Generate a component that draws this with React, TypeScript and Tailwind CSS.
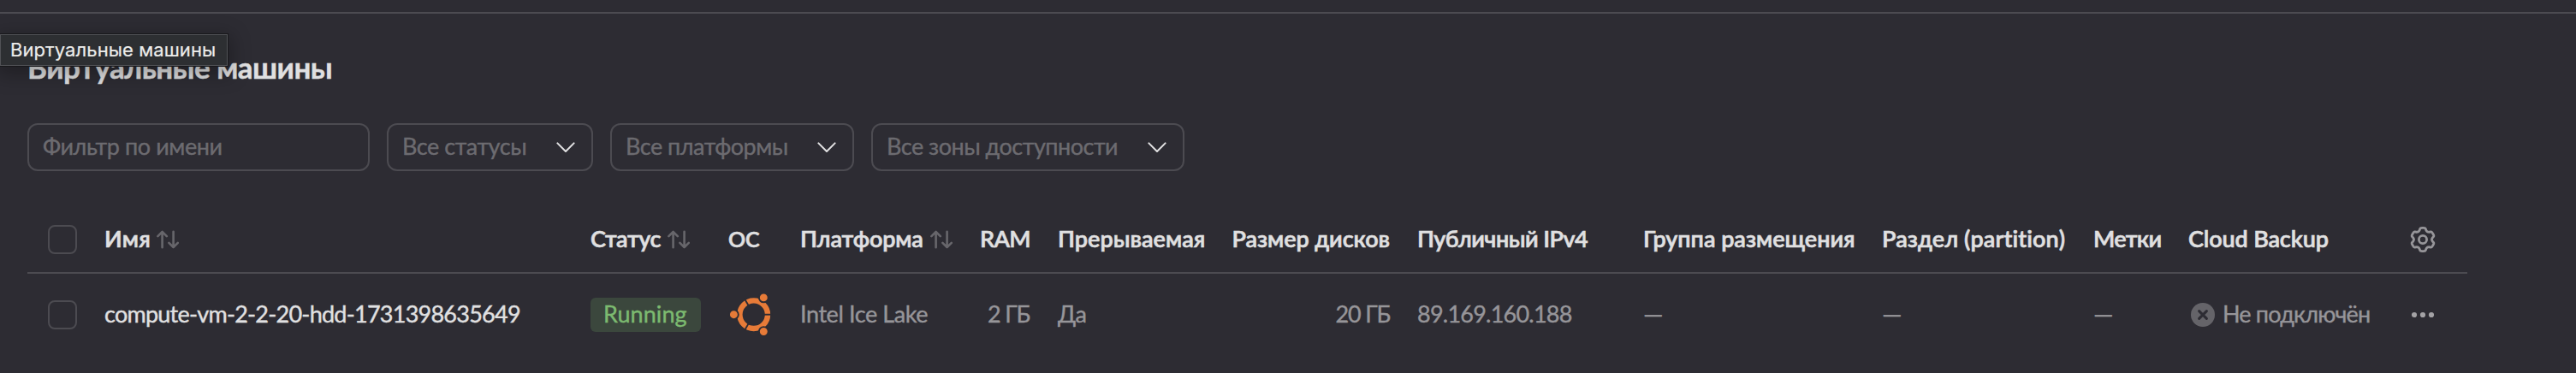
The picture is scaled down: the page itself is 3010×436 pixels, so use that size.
import type { ReactNode } from 'react';

const SortIcon = ({ className = 'ml-[9px]' }: { className?: string }) => (
  <svg className={`h-[22px] w-[26px] shrink-0 ${className}`} viewBox="0 0 26 22" fill="none" stroke="#67666b" strokeWidth="2.6" strokeLinecap="round" strokeLinejoin="round">
    <path d="M6.6 20.2V2M1.4 7.2 6.6 2l5.2 5.2" />
    <path d="M19.6 1.8V20M14.4 14.8l5.2 5.2 5.2-5.2" />
  </svg>
);

const Chevron = () => (
  <svg className="h-[14px] w-[22px] shrink-0" viewBox="0 0 22 14" fill="none" stroke="#e2e2e3" strokeWidth="2" strokeLinecap="round" strokeLinejoin="round">
    <path d="M1.4 2.4 11 12l9.6-9.6" />
  </svg>
);

const UbuntuIcon = () => (
  <svg className="h-[52px] w-[52px] shrink-0" viewBox="-29.7 -25.7 52 52">
    <circle r="16.3" fill="none" stroke="#e77b38" strokeWidth="6.4" />
    <g stroke="#2d2c33" strokeWidth="1.9">
      <path d="M10 0h12" />
      <path d="M-5-8.66-11-19.05" />
      <path d="M-5 8.66-11 19.05" />
    </g>
    <g fill="#e77b38" stroke="#2d2c33" strokeWidth="1.9">
      <circle cx="-23.3" cy="0" r="5.4" />
      <circle cx="11.6" cy="-19.8" r="5.4" />
      <circle cx="11.6" cy="19.8" r="5.4" />
    </g>
  </svg>
);

const gearPoints = [0, 1, 2, 3, 4, 5].flatMap((i) => {
  const a = (i * Math.PI) / 3;
  return [[-3.9, -10.6], [-3, -13.6], [3, -13.6], [3.9, -10.6], [5.2, -9]].map(([x, y]) => [
    x * Math.cos(a) - y * Math.sin(a),
    x * Math.sin(a) + y * Math.cos(a),
  ]);
});

const gearPath =
  gearPoints
    .map((p, i) => {
      const count = gearPoints.length;
      const prev = gearPoints[(i + count - 1) % count];
      const next = gearPoints[(i + 1) % count];
      const mix = (q: number[]) => `${p[0] + (q[0] - p[0]) * 0.35} ${p[1] + (q[1] - p[1]) * 0.35}`;
      return `${i === 0 ? 'M' : 'L'}${mix(prev)}Q${p[0]} ${p[1]} ${mix(next)}`;
    })
    .join('') + 'Z';

const GearIcon = () => (
  <svg className="h-8 w-[30px] shrink-0" viewBox="-15 -16 30 32" fill="none" stroke="#969599" strokeWidth="2.8" strokeLinejoin="round">
    <path d={gearPath} />
    <circle r="4.6" />
  </svg>
);

const CrossIcon = () => (
  <svg className="mr-[9px] ml-[3px] h-7 w-7 shrink-0" viewBox="0 0 28 28">
    <circle cx="14" cy="14" r="14" fill="#656469" />
    <path d="m9.6 9.6 8.8 8.8m0-8.8-8.8 8.8" stroke="#2d2c33" strokeWidth="3" strokeLinecap="round" />
  </svg>
);

const DotsIcon = () => (
  <svg className="ml-0.5 h-2 w-7 shrink-0" viewBox="0 0 28 8" fill="#a3a2a5">
    <circle cx="3" cy="4" r="3.1" />
    <circle cx="13" cy="4" r="3.1" />
    <circle cx="23" cy="4" r="3.1" />
  </svg>
);

const Checkbox = () => <span className="block size-[34px] rounded-lg border-2 border-[#4c4b51]" />;

const Text = ({ className = '', children }: { className?: string; children: ReactNode }) => (
  <span className={`block pb-[3px] whitespace-pre ${className}`}>{children}</span>
);

const Dash = () => <Text className="origin-left scale-x-110">—</Text>;

const Cell = ({ className = '', children }: { className?: string; children?: ReactNode }) => (
  <div className={`flex min-w-0 items-center ${className}`}>{children}</div>
);

const Select = ({ className, text, tracking }: { className: string; text: string; tracking: string }) => (
  <div className={`flex h-14 items-center justify-between rounded-xl border-2 border-[#4c4b51] pr-[19px] pl-4 ${className}`}>
    <Text className={tracking}>{text}</Text>
    <Chevron />
  </div>
);

const rowGrid =
  'grid w-[2851px] grid-cols-[66px_568px_161px_84px_209px_92px_204px_216px_264px_279px_247px_111px_259px_67px] pl-6';

export default function App() {
  return (
    <div className="relative h-[436px] w-full overflow-hidden bg-[#2d2c33] pt-3.5 font-['Lato','Noto_Sans',sans-serif] text-[27px] leading-9 text-[#969599] [-webkit-text-stroke:0.4px]">
      <div className="h-0.5 bg-[#4c4b51]" />

      <div className="absolute top-[39px] left-0 flex h-[39px] w-[267px] items-center border border-l-0 border-[#18181b] bg-[#2d2f32] shadow-[0_6px_22px_4px_rgba(0,0,0,0.28)]">
        <div className="flex h-full w-full items-center border border-[#515256] pb-px pl-[11px] font-['Inter',sans-serif] text-[22px] leading-none font-normal tracking-[0.08px] whitespace-nowrap text-[#ececea] [-webkit-text-stroke:0.2px]">
          Виртуальные машины
        </div>
      </div>

      <div className="flex flex-col pt-[42px] pl-8">
        <h1 className="text-[35px] leading-[41px] font-bold tracking-[-0.52px] text-[#e0e0e1]">Виртуальные машины</h1>

        <div className="mt-[45px] flex gap-5 text-[#6c6b70]">
          <div className="flex h-14 w-[400px] items-center rounded-xl border-2 border-[#4c4b51] pl-4">
            <Text className="tracking-[-0.42px]">Фильтр по имени</Text>
          </div>
          <Select className="w-[241px]" text="Все статусы" tracking="tracking-[-0.45px]" />
          <Select className="w-[285px]" text="Все платформы" tracking="tracking-[-0.5px]" />
          <Select className="w-[366px]" text="Все зоны доступности" tracking="tracking-[-0.5px]" />
        </div>

        <div className={`mt-[42px] h-[78px] border-b-2 border-[#4c4b51] font-semibold text-[#e0e0e1] [-webkit-text-stroke:0.6px] ${rowGrid}`}>
          <Cell><Checkbox /></Cell>
          <Cell><Text className="tracking-[0.2px]">Имя</Text><SortIcon className="ml-[7px]" /></Cell>
          <Cell><Text className="tracking-[-0.45px]">Статус</Text><SortIcon className="ml-2" /></Cell>
          <Cell><Text className="text-[25px]">ОС</Text></Cell>
          <Cell><Text className="tracking-[-0.15px]">Платформа</Text><SortIcon className="ml-2" /></Cell>
          <Cell className="justify-end pr-8"><Text className="tracking-[-0.64px]">RAM</Text></Cell>
          <Cell><Text className="tracking-[0.02px]">Прерываемая</Text></Cell>
          <Cell className="justify-end pr-8"><Text className="tracking-[-0.08px]">Размер дисков</Text></Cell>
          <Cell><Text className="tracking-[-0.52px]">Публичный IPv4</Text></Cell>
          <Cell><Text className="tracking-[-0.02px]">Группа размещения</Text></Cell>
          <Cell><Text className="tracking-[0.09px]">Раздел (partition)</Text></Cell>
          <Cell><Text className="tracking-[-0.67px]">Метки</Text></Cell>
          <Cell><Text className="tracking-[-0.14px]">Cloud Backup</Text></Cell>
          <Cell><GearIcon /></Cell>
        </div>

        <div className={`h-24 ${rowGrid}`}>
          <Cell><Checkbox /></Cell>
          <Cell><Text className="tracking-[-0.75px] text-[#e0e0e1]">compute-vm-2-2-20-hdd-1731398635649</Text></Cell>
          <Cell>
            <span className="flex h-10 w-[129px] items-center rounded-md bg-[#3b473d] pl-[15px] text-[#7cba70]">
              <Text className="tracking-[0.07px]">Running</Text>
            </span>
          </Cell>
          <Cell><UbuntuIcon /></Cell>
          <Cell><Text className="tracking-[-0.41px]">Intel Ice Lake</Text></Cell>
          <Cell className="justify-end pr-[33px]"><Text className="tracking-[-1.2px]">2 ГБ</Text></Cell>
          <Cell><Text className="tracking-[-0.71px]">Да</Text></Cell>
          <Cell className="justify-end pr-8"><Text className="tracking-[-1.2px]">20 ГБ</Text></Cell>
          <Cell><Text className="tracking-[-0.77px]">89.169.160.188</Text></Cell>
          <Cell><Dash /></Cell>
          <Cell><Dash /></Cell>
          <Cell><Dash /></Cell>
          <Cell><CrossIcon /><Text className="tracking-[-0.83px]">Не подключён</Text></Cell>
          <Cell><DotsIcon /></Cell>
        </div>
      </div>
    </div>
  );
}
